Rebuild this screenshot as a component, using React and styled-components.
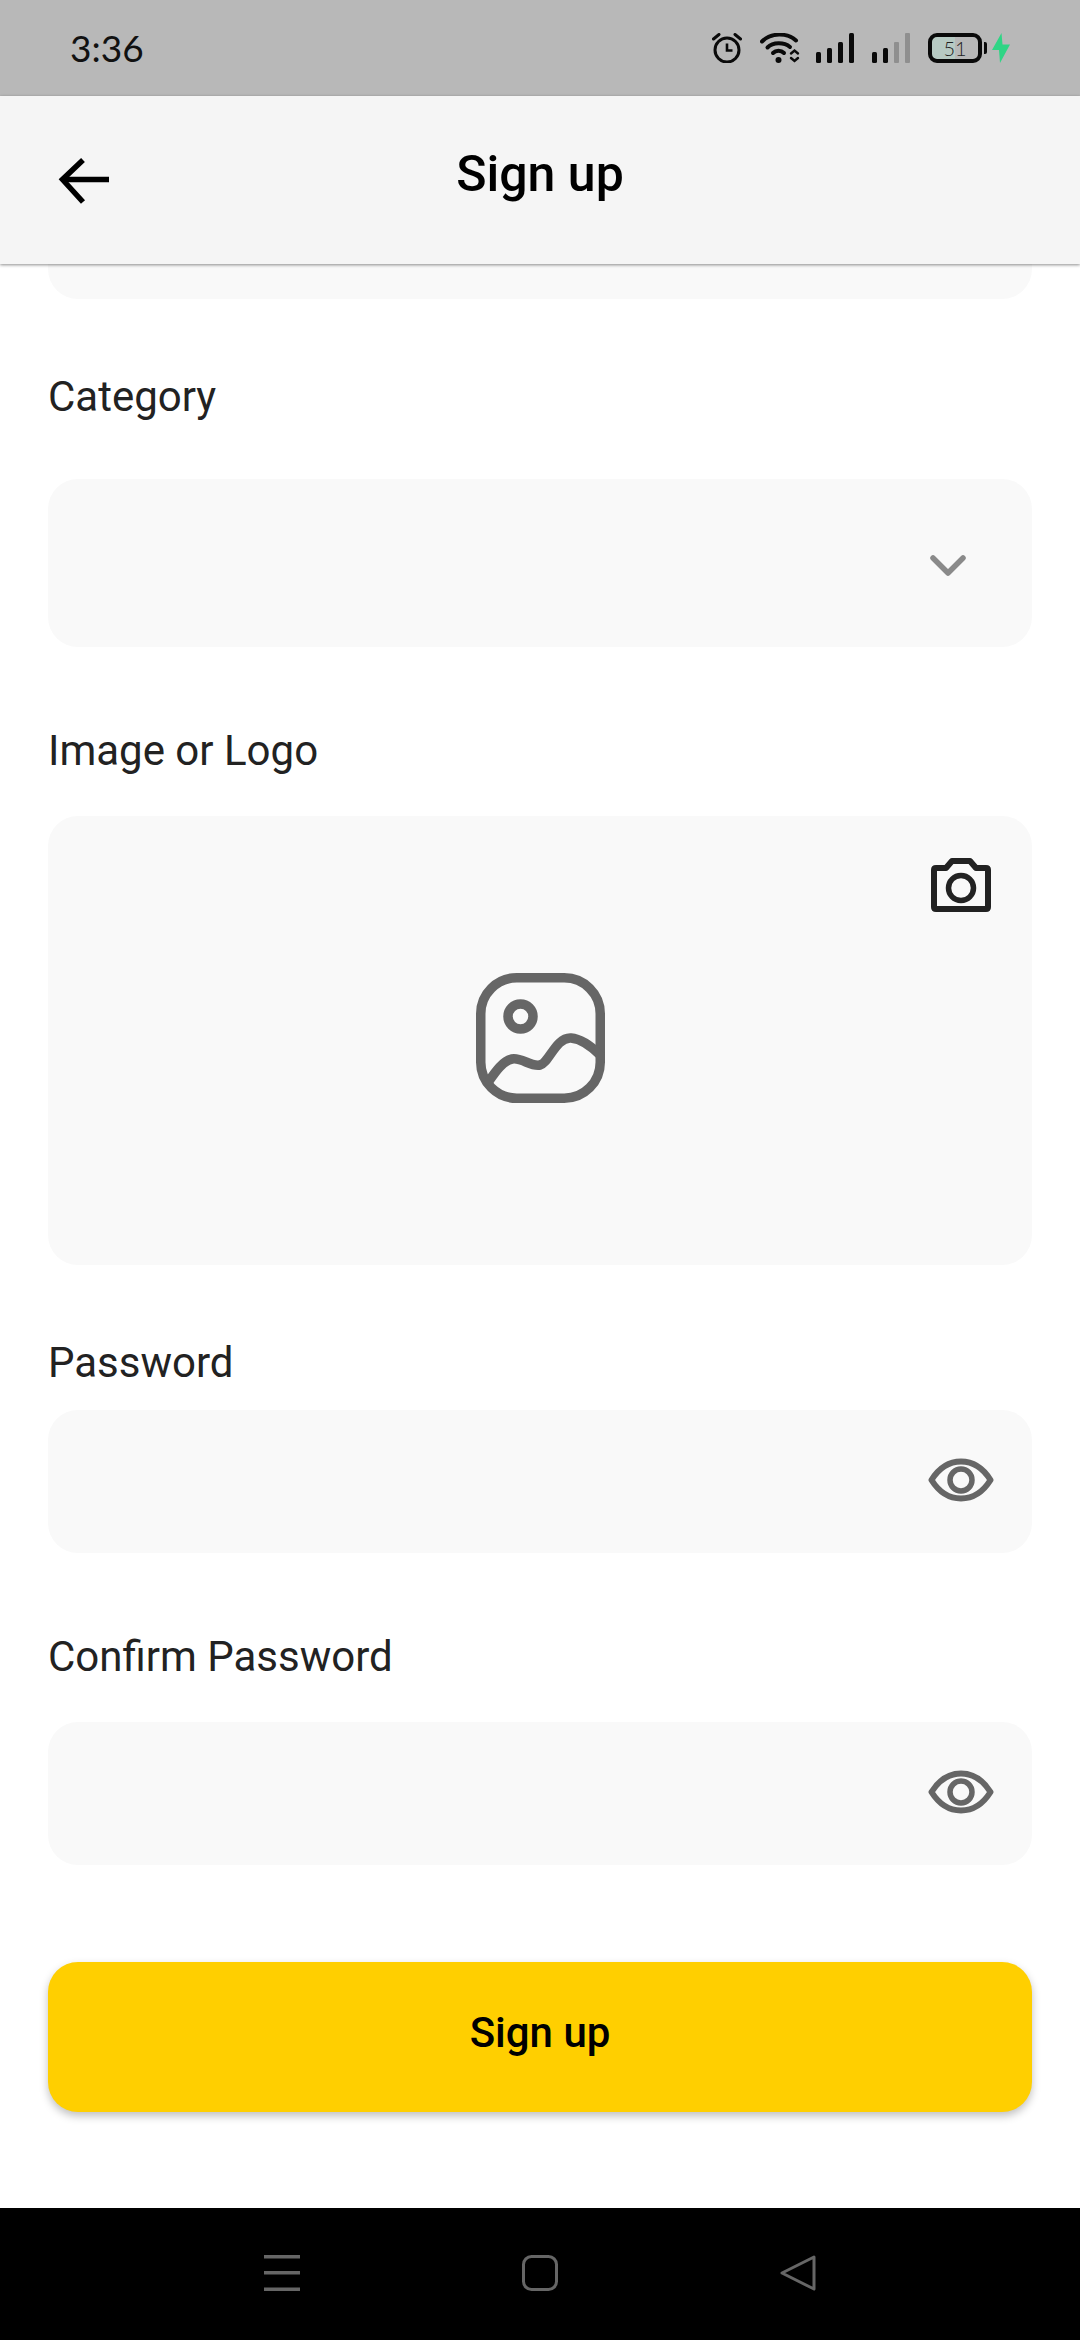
import React from "react";
import styled, { createGlobalStyle } from "styled-components";

const Global = createGlobalStyle`
  html, body { margin: 0; padding: 0; background: #fff; }
  body { font-family: Roboto, "Liberation Sans", sans-serif; }
`;

const Page = styled.div`
  width: 1080px;
  height: 2340px;
  display: flex;
  flex-direction: column;
  overflow: hidden;
  background: #fff;
`;

const StatusBar = styled.div`
  height: 96px;
  flex: none;
  background: #b8b8b8;
  display: flex;
  align-items: center;
  justify-content: space-between;
  padding: 0 70px;
`;

const Time = styled.span`
  font-family: Lato, sans-serif;
  font-weight: 400;
  font-size: 37px;
  color: #111;
  line-height: 1;
  margin-bottom: 2px;
`;

const StatusIcons = styled.div`
  display: flex;
  align-items: center;
  height: 30px;
`;

const StatusIcon = styled.svg`
  display: block;
  flex: none;
  margin-left: ${(p) => p.$gap || 0}px;
`;

const Battery = styled.div`
  position: relative;
  box-sizing: border-box;
  width: 54px;
  height: 30px;
  margin-left: 18px;
  border: 4px solid #0a0a0a;
  border-radius: 9px;
  background: linear-gradient(90deg, #b7cac3 51%, transparent 51%);
  display: flex;
  align-items: center;
  justify-content: center;
  font-family: Lato, sans-serif;
  font-weight: 300;
  font-size: 20px;
  color: #222;
  &::after {
    content: "";
    position: absolute;
    right: -9px;
    top: 5px;
    width: 3px;
    height: 12px;
    background: #0a0a0a;
    border-radius: 0 2px 2px 0;
  }
`;

const AppBar = styled.header`
  position: relative;
  z-index: 1;
  height: 168px;
  flex: none;
  box-sizing: border-box;
  background: #f5f5f5;
  box-shadow: 0 1px 3px rgba(0, 0, 0, 0.45);
  display: flex;
  align-items: flex-start;
  justify-content: center;
`;

const BackButton = styled.svg`
  position: absolute;
  left: 58px;
  top: 62px;
`;

const Title = styled.h1`
  margin: 50px 0 0;
  font-size: 50px;
  line-height: 56px;
  font-weight: 500;
  color: #000;
`;

const Content = styled.main`
  flex: 1;
  min-height: 0;
  padding: 0 48px;
  display: flex;
  flex-direction: column;
`;

const CutInput = styled.div`
  height: 35px;
  flex: none;
  background: #f9f9f9;
  border-radius: 0 0 30px 30px;
`;

const Label = styled.label`
  display: block;
  flex: none;
  font-size: 42px;
  line-height: 48px;
  color: #222;
  margin: ${(p) => p.$top}px 0 ${(p) => p.$bottom}px;
`;

const Control = styled.div`
  flex: none;
  height: ${(p) => p.$height}px;
  background: #f9f9f9;
  border-radius: 30px;
  display: flex;
  align-items: center;
  justify-content: flex-end;
  padding-right: ${(p) => p.$inset}px;
`;

const Chevron = styled.svg`
  margin-top: 6px;
  margin-right: 2px;
`;

const EyeIcon = styled.svg`
  margin-bottom: 3px;
`;

const ImageBox = styled.div`
  position: relative;
  flex: none;
  height: 449px;
  box-sizing: border-box;
  padding-bottom: 6px;
  background: #f9f9f9;
  border-radius: 30px;
  display: flex;
  align-items: center;
  justify-content: center;
`;

const CameraButton = styled.svg`
  position: absolute;
  right: 41px;
  top: 42px;
`;

const PrimaryButton = styled.button`
  flex: none;
  height: 150px;
  margin-top: 97px;
  border: 0;
  border-radius: 30px;
  background: #ffcf00;
  box-shadow: 0 4px 8px rgba(0, 0, 0, 0.25);
  font-family: inherit;
  font-size: 42px;
  font-weight: 500;
  color: #000;
  padding: 0 0 10px;
`;

const NavBar = styled.nav`
  height: 132px;
  flex: none;
  background: #000;
  display: flex;
  align-items: center;
  justify-content: center;
  padding-bottom: 2px;
  box-sizing: border-box;
`;

const NavIcon = styled.svg`
  display: block;
  margin-left: ${(p) => p.$gap || 0}px;
`;

const Eye = () => (
  <EyeIcon width="66" height="44" viewBox="0 0 66 44" fill="none" stroke="#666" strokeWidth="6">
    <path d="M3.5 22C11 10 21 3.5 33 3.5S55 10 62.5 22C55 34 45 40.5 33 40.5S11 34 3.5 22Z" strokeLinejoin="round" />
    <circle cx="33" cy="22" r="11" strokeWidth="5.5" />
  </EyeIcon>
);

export default function App() {
  return (
    <Page>
      <Global />
      <StatusBar>
        <Time>3:36</Time>
        <StatusIcons>
          <StatusIcon width="30" height="30" viewBox="0 0 30 30" fill="none" stroke="#0a0a0a">
            <circle cx="15" cy="17" r="12" strokeWidth="3" />
            <path d="M15 10.5V17.5H20.5" strokeWidth="2.6" />
            <path d="M1.5 6L7 1.5M28.5 6L23 1.5" strokeWidth="3" strokeLinecap="round" />
          </StatusIcon>
          <StatusIcon $gap={18} width="40" height="30" viewBox="0 0 40 30" fill="none" stroke="#0a0a0a" strokeLinecap="round">
            <path d="M2 8.5C11 -0.5 27 -0.5 36 7.5" strokeWidth="4" />
            <path d="M7.5 14.5C13 9 24 9 30 14" strokeWidth="4" />
            <path d="M13 20C16 17 21 17 24 20" strokeWidth="4" />
            <circle cx="18.5" cy="27" r="3" fill="#0a0a0a" stroke="none" />
            <path d="M31 20.5L34.5 17.5L38 20.5M31 25L34.5 28L38 25" strokeWidth="2.4" />
          </StatusIcon>
          <StatusIcon $gap={16} width="38" height="30" viewBox="0 0 38 30" fill="#0a0a0a">
            <rect x="0" y="19" width="5" height="11" rx="1.5" />
            <rect x="11" y="15" width="5" height="15" rx="1.5" />
            <rect x="22" y="9" width="5" height="21" rx="1.5" />
            <rect x="33" y="0" width="5" height="30" rx="1.5" />
          </StatusIcon>
          <StatusIcon $gap={18} width="38" height="30" viewBox="0 0 38 30" fill="#0a0a0a">
            <rect x="0" y="19" width="5" height="11" rx="1.5" />
            <rect x="11" y="15" width="5" height="15" rx="1.5" />
            <rect x="22" y="9" width="5" height="21" rx="1" fill="#8f8f8f" />
            <rect x="33" y="0" width="5" height="30" rx="1" fill="#8f8f8f" />
          </StatusIcon>
          <Battery>51</Battery>
          <StatusIcon $gap={10} width="18" height="30" viewBox="0 0 18 30" fill="#2fd585">
            <path d="M9.5 0L0 17H7L8 30L18 11.5H10.5Z" />
          </StatusIcon>
        </StatusIcons>
      </StatusBar>

      <AppBar>
        <BackButton width="52" height="48" viewBox="0 0 52 48" fill="none" stroke="#000" strokeWidth="5.5">
          <path d="M51 21.5H5" />
          <path d="M25 2L4.5 21.5L25 44" />
        </BackButton>
        <Title>Sign up</Title>
      </AppBar>

      <Content>
        <CutInput />

        <Label $top={74} $bottom={58}>Category</Label>
        <Control $height={168} $inset={64}>
          <Chevron width="36" height="22" viewBox="0 0 36 22" fill="none" stroke="#8a8a8a" strokeWidth="5.5" strokeLinecap="round" strokeLinejoin="round">
            <path d="M3 3L18 18L33 3" />
          </Chevron>
        </Control>

        <Label $top={80} $bottom={41}>Image or Logo</Label>
        <ImageBox>
          <CameraButton width="60" height="54" viewBox="0 0 60 54" fill="none" stroke="#222" strokeWidth="6" strokeLinejoin="round">
            <path d="M5 10H15L21 3H39L45 10H55Q57 10 57 12V49Q57 51 55 51H5Q3 51 3 49V12Q3 10 5 10Z" />
            <circle cx="30" cy="30" r="12.5" strokeWidth="5.5" />
          </CameraButton>
          <svg width="129" height="130" viewBox="0 0 129 130" fill="none" stroke="#666" strokeWidth="9.5" strokeLinecap="round">
            <rect x="4.75" y="4.75" width="119.5" height="120.5" rx="36" />
            <circle cx="44.5" cy="43.5" r="12.5" />
            <path d="M13 108C20 98 27 88 36 86C45 84 55 94 64 92C73 90 80 64 95 65C106 66 116 74 124 82" />
          </svg>
        </ImageBox>

        <Label $top={74} $bottom={23}>Password</Label>
        <Control $height={143} $inset={38}>
          <Eye />
        </Control>

        <Label $top={80} $bottom={41}>Confirm Password</Label>
        <Control $height={143} $inset={38}>
          <Eye />
        </Control>

        <PrimaryButton>Sign up</PrimaryButton>
      </Content>

      <NavBar>
        <NavIcon width="36" height="36" viewBox="0 0 36 36" fill="#666">
          <rect y="0" width="36" height="3.5" />
          <rect y="16" width="36" height="3.5" />
          <rect y="32.5" width="36" height="3.5" />
        </NavIcon>
        <NavIcon $gap={222} width="36" height="36" viewBox="0 0 36 36" fill="none" stroke="#666" strokeWidth="3">
          <rect x="1.5" y="1.5" width="33" height="33" rx="8" />
        </NavIcon>
        <NavIcon $gap={222} width="36" height="36" viewBox="0 0 36 36" fill="none" stroke="#666" strokeWidth="3" strokeLinejoin="round">
          <path d="M34 2L2 18L34 34Z" />
        </NavIcon>
      </NavBar>
    </Page>
  );
}
